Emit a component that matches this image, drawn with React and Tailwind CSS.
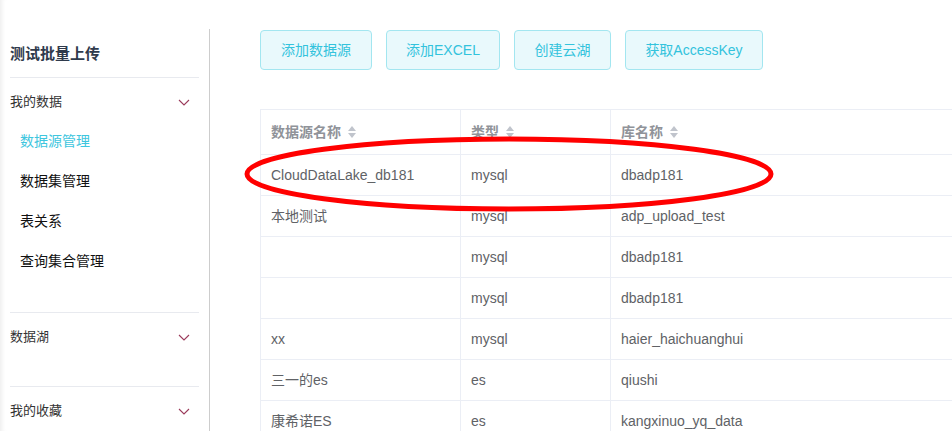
const font = { fontFamily: '"Liberation Sans", "Noto Sans CJK SC", sans-serif' }

const buttons = [
  { label: '添加数据源', w: 'w-[112px]' },
  { label: '添加EXCEL', w: 'w-[114px]' },
  { label: '创建云湖', w: 'w-[97px]' },
  { label: '获取AccessKey', w: 'w-[138px]' },
]

const rows = [
  ['CloudDataLake_db181', 'mysql', 'dbadp181'],
  ['本地测试', 'mysql', 'adp_upload_test'],
  ['', 'mysql', 'dbadp181'],
  ['', 'mysql', 'dbadp181'],
  ['xx', 'mysql', 'haier_haichuanghui'],
  ['三一的es', 'es', 'qiushi'],
  ['康希诺ES', 'es', 'kangxinuo_yq_data'],
]

function Chevron() {
  return (
    <svg width="12" height="7" viewBox="0 0 12 7" className="mr-[9px]">
      <path d="M1 1 L6 6 L11 1" fill="none" stroke="#9b3b5b" strokeWidth="1.1" />
    </svg>
  )
}

function SortIcon() {
  return (
    <svg width="10" height="14" viewBox="0 0 10 14" className="ml-[6px]">
      <path d="M5 1 L9 6 L1 6 Z" fill="#c0c4cc" />
      <path d="M5 13 L9 8 L1 8 Z" fill="#c0c4cc" />
    </svg>
  )
}

function Section({ title }) {
  return (
    <div className="flex items-center justify-between pt-[14px] leading-[20px] text-[13px] text-[#333]">
      <span>{title}</span>
      <Chevron />
    </div>
  )
}

function Sidebar() {
  const items = ['数据源管理', '数据集管理', '表关系', '查询集合管理']
  return (
    <aside className="mt-[29px] w-[210px] shrink-0 border-r border-[#cdcdcd] px-[10px]">
      <div className="border-b border-[#e8eaef] pt-[15px] pb-[13px] text-[15px] font-bold leading-[20px] text-[#2f3a4c]">
        测试批量上传
      </div>
      <div className="border-b border-[#e8eaef] pb-[31px]">
        <Section title="我的数据" />
        <ul className="mt-[9px]">
          {items.map((t, i) => (
            <li
              key={t}
              className={
                'flex h-10 items-center pl-[10px] text-[14px] ' +
                (i === 0 ? 'text-[#3ec6de]' : 'text-[#111]')
              }
            >
              {t}
            </li>
          ))}
        </ul>
      </div>
      <div className="border-b border-[#e8eaef] pb-[39px]">
        <Section title="数据湖" />
      </div>
      <Section title="我的收藏" />
    </aside>
  )
}

function DataTable() {
  return (
    <div className="mt-[39px] w-[760px] border-t border-l border-[#ebeef5] text-[14px]">
      <div className="flex h-[45px] border-b border-[#ebeef5] font-bold text-[#909399]">
        {['数据源名称', '类型', '库名称'].map((h, i) => (
          <div
            key={h}
            className={
              'flex items-center pl-[10px] ' +
              (i === 0 ? 'w-[200px] border-r border-[#ebeef5]' : i === 1 ? 'w-[150px] border-r border-[#ebeef5]' : 'flex-1')
            }
          >
            {h}
            <SortIcon />
          </div>
        ))}
      </div>
      {rows.map((r, idx) => (
        <div key={idx} className="flex h-[41px] border-b border-[#ebeef5] text-[#606266]">
          <div className="flex w-[200px] items-center border-r border-[#ebeef5] pl-[10px]">{r[0]}</div>
          <div className="flex w-[150px] items-center border-r border-[#ebeef5] pl-[10px]">{r[1]}</div>
          <div className="flex flex-1 items-center pl-[10px]">{r[2]}</div>
        </div>
      ))}
    </div>
  )
}

export default function App() {
  return (
    <div
      className="relative flex h-[431px] w-[952px] overflow-hidden bg-white shadow-[inset_5px_0_4px_-3px_rgba(0,0,0,0.07)]"
      style={font}
    >
      <Sidebar />
      <main className="flex-1 pl-[50px] pt-[30px]">
        <div className="flex gap-[14px]">
          {buttons.map((b) => (
            <button
              key={b.label}
              className={
                'h-[40px] rounded-[4px] border border-[#a3e6f0] bg-[#e9f9fc] text-[14px] text-[#33c3dc] ' + b.w
              }
            >
              {b.label}
            </button>
          ))}
        </div>
        <DataTable />
      </main>

      {/* hand-drawn highlight around the first row */}
      <svg className="pointer-events-none absolute left-0 top-0" width="952" height="431">
        <ellipse cx="509" cy="174" rx="262" ry="35" fill="none" stroke="#ff0000" strokeWidth="5" />
      </svg>
    </div>
  )
}
